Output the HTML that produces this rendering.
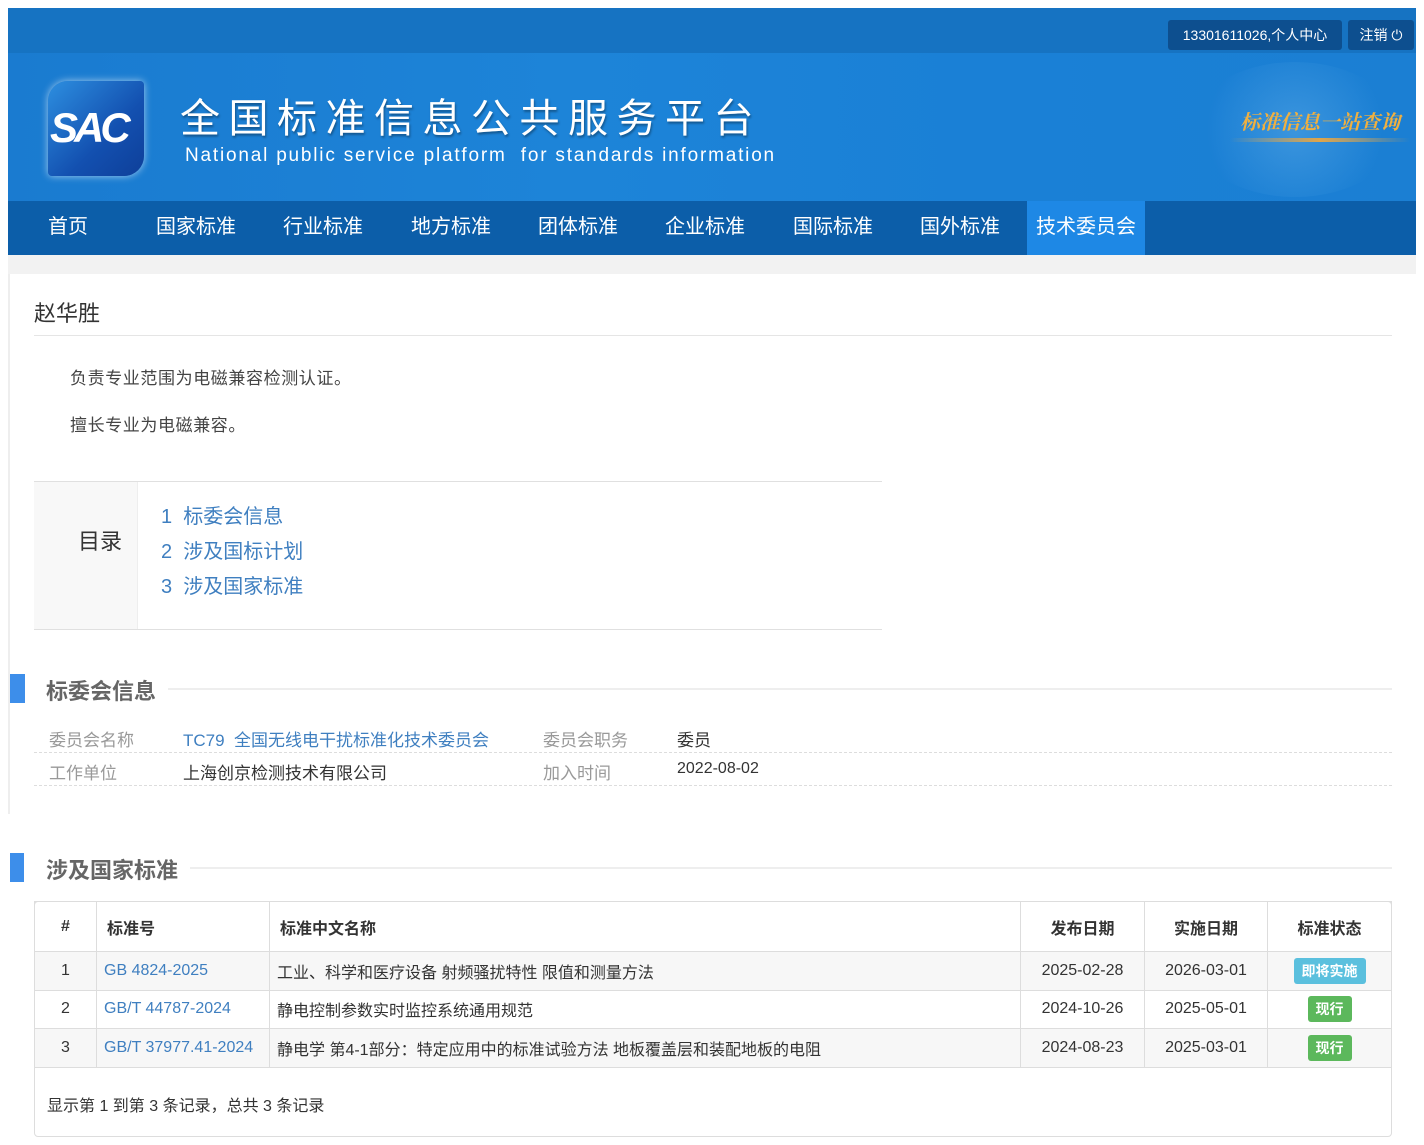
<!DOCTYPE html>
<html><head><meta charset="utf-8"><style>
*{box-sizing:border-box;margin:0;padding:0}
body{width:1424px;height:1145px;background:#fff;font-family:"Liberation Sans","Noto Sans CJK SC",sans-serif;position:relative;overflow:hidden;color:#333}
.a{position:absolute}
.top{left:8px;top:8px;width:1408px;height:45px;background:#1673c2}
.ban{left:8px;top:53px;width:1408px;height:148px;background:linear-gradient(90deg,#1a7bd0 0%,#1d84d8 40%,#1a80d6 70%,#1b7fd3 100%)}
.nav{left:8px;top:201px;width:1408px;height:54px;background:#0c5ea9}
.nav span{position:absolute;top:0;height:54px;line-height:52px;color:#fff;font-size:20px}
.btn{top:20px;height:30px;background:#0d4f8f;color:#fff;font-size:14px;line-height:30px;border-radius:3px;text-align:center}
th,td{border:1px solid #ddd;font-size:16px}
table{border-collapse:collapse;position:absolute;left:34px;top:901px;width:1358px}
th{height:50px;font-weight:bold;text-align:left;padding-left:10px}
td{height:38.5px;padding-left:7px}
tr.g td{background:#f7f7f7}
.lk{color:#3f7fc0}
.lab{color:#999;font-size:17px}
.bad{display:inline-block;color:#fff;font-weight:bold;font-size:14px;padding:3px 8px;border-radius:3px}
</style></head><body>
<div class="a top"></div>
<div class="a btn" style="left:1168px;width:174px">13301611026,个人中心</div>
<div class="a btn" style="left:1348px;width:66px">注销 ⏻</div>
<div class="a ban"></div>
<div class="a" style="left:1190px;top:62px;width:210px;height:135px;border-radius:50%;background:radial-gradient(circle,rgba(120,190,240,.35),rgba(30,130,215,0) 70%)"></div>
<div class="a" style="left:1230px;top:138px;width:180px;height:4px;background:linear-gradient(90deg,rgba(230,170,70,0),#e0a54a,rgba(230,170,70,0));border-radius:2px"></div>
<div class="a" style="left:1240px;top:106px;color:#f0b040;font-size:20px;font-style:italic;font-family:'Noto Serif CJK SC',serif;font-weight:bold">标准信息一站查询</div>
<div class="a" style="left:48px;top:81px;width:96px;height:95px;border-radius:20px 4px 20px 4px;background:linear-gradient(135deg,#2d8fe0,#1350b0 60%,#0e3f99);box-shadow:0 0 8px rgba(255,255,255,.6)"></div>
<div class="a" style="left:50px;top:104px;color:#fff;font-size:42px;font-weight:bold;font-style:italic;letter-spacing:-4px">SAC</div>
<div class="a" style="left:180px;top:86px;color:#fff;font-size:40px;letter-spacing:8.5px;text-shadow:1px 2px 2px rgba(0,0,0,.35)">全国标准信息公共服务平台</div>
<div class="a" style="left:185px;top:145px;color:#fff;font-size:19px;letter-spacing:1.8px">National public service platform&nbsp; for standards information</div>
<div class="a nav">
<span style="left:40px">首页</span><span style="left:148px">国家标准</span><span style="left:275px">行业标准</span><span style="left:403px">地方标准</span><span style="left:530px">团体标准</span><span style="left:657px">企业标准</span><span style="left:785px">国际标准</span><span style="left:912px">国外标准</span>
<span style="left:1019px;width:118px;background:#1e88e5;text-align:center">技术委员会</span></div>
<div class="a" style="left:8px;top:255px;width:1408px;height:19px;background:#f2f2f2"></div>
<div class="a" style="left:8px;top:274px;width:2px;height:540px;background:#eee"></div>
<div class="a" style="left:34px;top:296px;font-size:22px;color:#333">赵华胜</div>
<div class="a" style="left:34px;top:335px;width:1358px;height:1px;background:#e5e5e5"></div>
<div class="a" style="left:70px;top:364px;font-size:17px;color:#444;letter-spacing:.6px">负责专业范围为电磁兼容检测认证。</div>
<div class="a" style="left:70px;top:411px;font-size:17px;color:#444;letter-spacing:.6px">擅长专业为电磁兼容。</div>
<div class="a" style="left:34px;top:481px;width:848px;height:149px;border-top:1px solid #e0e0e0;border-bottom:1px solid #e0e0e0"></div>
<div class="a" style="left:34px;top:482px;width:104px;height:147px;background:#f8f8f8;border-right:1px solid #eee"></div>
<div class="a" style="left:78px;top:524px;font-size:22px">目录</div>
<div class="a lk" style="left:161px;top:500px;font-size:20px;line-height:35px">1&nbsp; 标委会信息<br>2&nbsp; 涉及国标计划<br>3&nbsp; 涉及国家标准</div>
<div class="a" style="left:10px;top:674px;width:15px;height:29px;background:#3d8eea"></div>
<div class="a" style="left:46px;top:674px;font-size:22px;font-weight:bold;color:#666">标委会信息</div>
<div class="a" style="left:168px;top:688px;width:1224px;height:2px;background:#eee"></div>
<div class="a" style="left:34px;top:752px;width:1358px;border-top:1px dashed #ddd"></div>
<div class="a" style="left:34px;top:785px;width:1358px;border-top:1px dashed #ddd"></div>
<div class="a lab" style="left:49px;top:726px">委员会名称</div>
<div class="a lk" style="left:183px;top:726px;font-size:17px">TC79&nbsp; 全国无线电干扰标准化技术委员会</div>
<div class="a lab" style="left:543px;top:726px">委员会职务</div>
<div class="a" style="left:677px;top:726px;font-size:17px">委员</div>
<div class="a lab" style="left:49px;top:759px">工作单位</div>
<div class="a" style="left:183px;top:759px;font-size:17px">上海创京检测技术有限公司</div>
<div class="a lab" style="left:543px;top:759px">加入时间</div>
<div class="a" style="left:677px;top:760px;font-size:16px">2022-08-02</div>
<div class="a" style="left:10px;top:853px;width:14px;height:29px;background:#3d8eea"></div>
<div class="a" style="left:46px;top:853px;font-size:22px;font-weight:bold;color:#666">涉及国家标准</div>
<div class="a" style="left:190px;top:867px;width:1202px;height:2px;background:#eee"></div>
<div class="a" style="left:34px;top:901px;width:1358px;height:236px;border:1px solid #ddd;border-radius:4px"></div>
<table>
<tr><th style="width:62px;text-align:center;padding:0">#</th><th style="width:173px">标准号</th><th style="width:751px">标准中文名称</th><th style="width:124px;text-align:center;padding:0">发布日期</th><th style="width:123px;text-align:center;padding:0">实施日期</th><th style="text-align:center;padding:0">标准状态</th></tr>
<tr class="g"><td style="text-align:center;padding:0">1</td><td class="lk">GB 4824-2025</td><td>工业、科学和医疗设备 射频骚扰特性 限值和测量方法</td><td style="text-align:center;padding:0">2025-02-28</td><td style="text-align:center;padding:0">2026-03-01</td><td style="text-align:center;padding:0"><span class="bad" style="background:#5bc0de">即将实施</span></td></tr>
<tr><td style="text-align:center;padding:0">2</td><td class="lk">GB/T 44787-2024</td><td>静电控制参数实时监控系统通用规范</td><td style="text-align:center;padding:0">2024-10-26</td><td style="text-align:center;padding:0">2025-05-01</td><td style="text-align:center;padding:0"><span class="bad" style="background:#5cb85c">现行</span></td></tr>
<tr class="g"><td style="text-align:center;padding:0">3</td><td class="lk">GB/T 37977.41-2024</td><td>静电学 第4-1部分：特定应用中的标准试验方法 地板覆盖层和装配地板的电阻</td><td style="text-align:center;padding:0">2024-08-23</td><td style="text-align:center;padding:0">2025-03-01</td><td style="text-align:center;padding:0"><span class="bad" style="background:#5cb85c">现行</span></td></tr>
</table>
<div class="a" style="left:47px;top:1092px;font-size:16px">显示第 1 到第 3 条记录，总共 3 条记录</div>
</body></html>
